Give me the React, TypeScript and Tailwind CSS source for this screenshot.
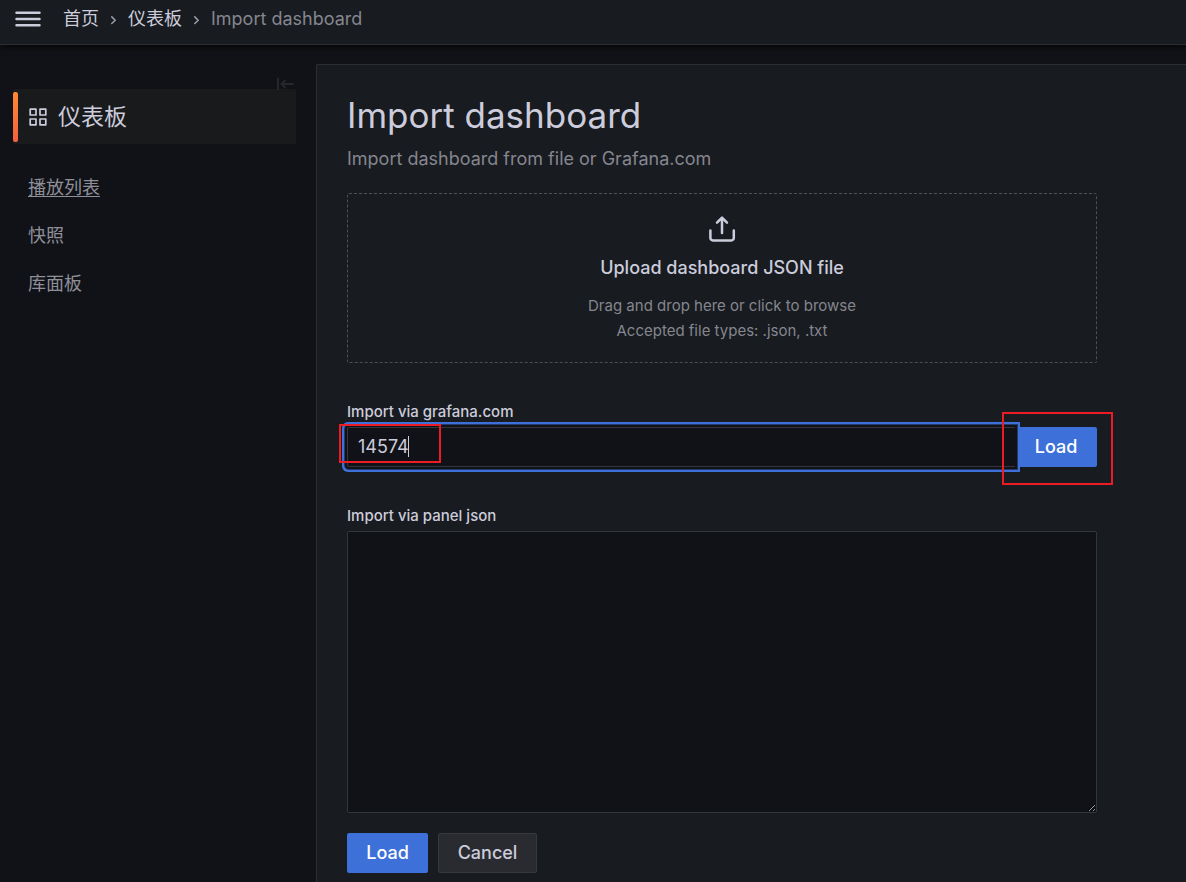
import { useState } from 'react';

const NAV_ITEMS = [
  { label: '播放列表', active: true },
  { label: '快照', active: false },
  { label: '库面板', active: false },
];

function Separator() {
  return (
    <svg className="mx-2 h-[13px] w-[13px] shrink-0" viewBox="0 0 13 13" fill="none" stroke="#9a9ba4" strokeWidth="1.6" strokeLinecap="round" strokeLinejoin="round" aria-hidden="true">
      <path d="M4.8 3.9 8.2 7.2 4.8 10.5" />
    </svg>
  );
}

function TopBar() {
  return (
    <header className="relative z-10 flex h-[45px] items-start border-b border-[#2d2e34] bg-[#181b1f] pl-4 shadow-[0_2px_6px_rgba(0,0,0,0.7)]">
      <button type="button" aria-label="Menu" className="mt-[7px] flex h-6 w-6 items-center justify-center">
        <svg className="h-6 w-6 shrink-0 overflow-visible" viewBox="0 0 24 24" stroke="#ccccdc" strokeWidth="2.5" strokeLinecap="round" aria-hidden="true">
          <path d="M0.5 5.7h23M0.5 12h23M0.5 18.3h23" />
        </svg>
      </button>
      <nav aria-label="Breadcrumbs" className="mt-[7px] ml-[23px] flex items-center text-lg leading-6">
        <a href="#home">首页</a>
        <Separator />
        <a href="#dashboards">仪表板</a>
        <Separator />
        <span className="text-[#85868f]">Import dashboard</span>
      </nav>
    </header>
  );
}

function SideNav() {
  return (
    <aside className="w-[316px] shrink-0 pt-8 pr-5 pl-[13px]">
      <div className="flex h-3 justify-end">
        <button type="button" aria-label="Collapse navigation">
          <svg className="h-4 w-5 overflow-visible" viewBox="0 0 20 16" fill="none" stroke="#25272b" strokeWidth="2" strokeLinecap="round" strokeLinejoin="round" aria-hidden="true">
            <path d="M2 1.5v11M17 7H6M9 3.5 5.5 7 9 10.5" />
          </svg>
        </button>
      </div>
      <a href="#dashboards" className="flex h-[55px] items-center rounded-xs bg-[#181a1c]">
        <span className="h-[50px] w-[5px] shrink-0 rounded-xs bg-linear-to-b from-[#ff8833] to-[#f55f3e]" />
        <svg className="ml-[11px] h-[18px] w-[18px] shrink-0" viewBox="0 0 18 18" fill="none" stroke="#ccccdc" strokeWidth="1.7" strokeLinejoin="round" aria-hidden="true">
          <path d="M1.2 1.2h5.8v5.8H1.2zM11 1.2h5.8v5.8H11zM1.2 11h5.8v5.8H1.2zM11 11h5.8v5.8H11z" />
        </svg>
        <span className="ml-[11px] text-[23px] leading-8">仪表板</span>
      </a>
      <ul className="mt-5 pl-[15px] text-lg text-[#8e8f99]">
        {NAV_ITEMS.map((item) => (
          <li key={item.label} className="flex h-12 items-center">
            <a href="#section" className={item.active ? 'underline underline-offset-2' : ''}>
              {item.label}
            </a>
          </li>
        ))}
      </ul>
    </aside>
  );
}

function DropZone() {
  return (
    <label className="mt-[22px] flex h-[170px] cursor-pointer flex-col items-center rounded-xs border border-dashed border-[#4d4f55] pt-5">
      <input type="file" accept=".json,.txt" className="sr-only" />
      <svg className="h-[30px] w-[30px]" viewBox="0 0 30 30" fill="none" stroke="#ccccdc" strokeWidth="2.5" strokeLinecap="round" strokeLinejoin="round" aria-hidden="true">
        <path d="M15 19V3.8M10 8.6l5-5 5 5M3.4 16.5v7.4a2.5 2.5 0 0 0 2.5 2.5h18.4a2.5 2.5 0 0 0 2.5-2.5v-7.4" />
      </svg>
      <span className="mt-3 text-lg leading-6 font-medium">Upload dashboard JSON file</span>
      <span className="mt-[13px] text-center text-[15px] leading-[25px] text-[#85868f]">
        Drag and drop here or click to browse
        <br />
        Accepted file types: .json, .txt
      </span>
    </label>
  );
}

export default function App() {
  const [dashboardId, setDashboardId] = useState('14574');
  const [json, setJson] = useState('');

  return (
    <div className="flex min-h-screen flex-col bg-[#111217] font-['Inter','Noto_Sans_CJK_SC',sans-serif] text-[#ccccdc]">
      <TopBar />
      <div className="flex flex-1">
        <SideNav />
        <main className="mt-[19px] min-w-0 flex-1 rounded-tl-xs border-t border-l border-[#2d2e34] bg-[#181b1f] px-[30px] pt-7 pb-2">
          <div className="max-w-[750px]">
            <h1 className="text-[35px] leading-[44px]">Import dashboard</h1>
            <p className="mt-[10px] text-lg leading-6 text-[#85868f]">Import dashboard from file or Grafana.com</p>
            <DropZone />

            <form onSubmit={(e) => e.preventDefault()}>
              <label htmlFor="dashboard-id" className="mt-[39px] block text-[15px] leading-5 font-medium">
                Import via grafana.com
              </label>
              <div className="relative mt-[5px] flex h-10">
                <input
                  id="dashboard-id"
                  type="text"
                  value={dashboardId}
                  onChange={(e) => setDashboardId(e.target.value)}
                  className="relative z-10 min-w-0 flex-1 rounded-l-xs border border-r-0 border-[#35363b] bg-[#111217] px-[10px] text-lg caret-transparent shadow-[0_0_0_2px_#111217,0_0_0_3px_#233a6b,0_0_0_5px_#3d71d9] outline-none"
                />
                <span className="pointer-events-none absolute top-[9px] left-[61px] z-10 h-[21px] w-px bg-[#ccccdc]" />
                <button type="submit" className="w-[82px] rounded-r-xs bg-[#3d71d9] text-lg font-medium text-white">
                  Load
                </button>
                <span className="pointer-events-none absolute -top-[3px] -left-2 z-20 h-[39px] w-[102px] border-2 border-[#ed1c24]" />
                <span className="pointer-events-none absolute -top-[15px] -right-4 z-20 h-[73px] w-[111px] border-2 border-[#ed1c24]" />
              </div>
            </form>

            <form onSubmit={(e) => e.preventDefault()}>
              <label htmlFor="panel-json" className="mt-[39px] block text-[15px] leading-5 font-medium">
                Import via panel json
              </label>
              <textarea
                id="panel-json"
                value={json}
                onChange={(e) => setJson(e.target.value)}
                className="mt-[5px] block h-[282px] w-full rounded-xs border border-[#35363b] bg-[#111217] px-[10px] py-1 text-lg outline-none"
              />
              <div className="mt-5 flex gap-[10px] text-lg font-medium">
                <button type="submit" className="h-10 w-[81px] rounded-xs bg-[#3d71d9] text-white">
                  Load
                </button>
                <button type="button" className="h-10 w-[99px] rounded-xs border border-[#38393e] bg-[#2a2b30]">
                  Cancel
                </button>
              </div>
            </form>
          </div>
        </main>
      </div>
    </div>
  );
}
